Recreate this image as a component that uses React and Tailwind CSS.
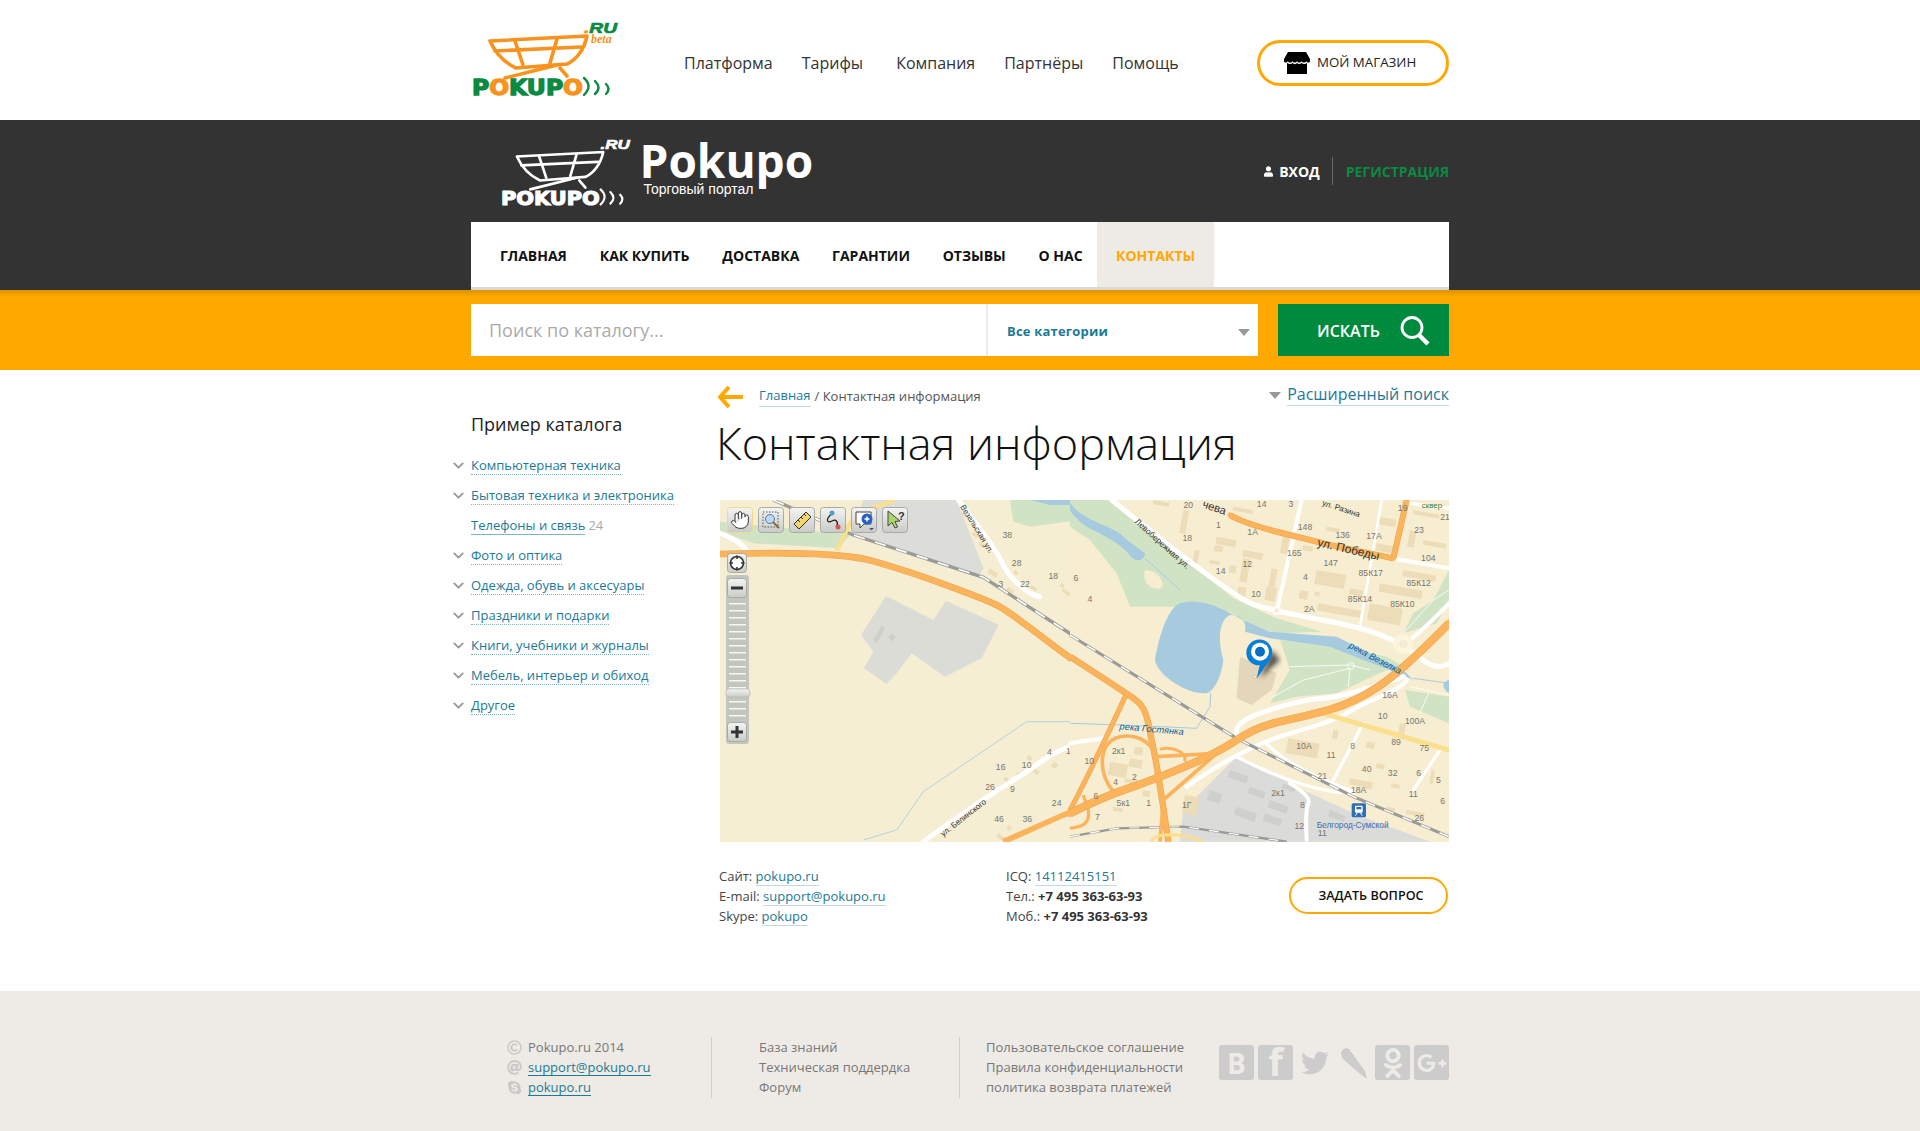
import React from 'react';
import { FaTwitter, FaOdnoklassniki, FaGooglePlusG, FaSkype, FaRegCopyright, FaAt, FaUser } from 'react-icons/fa';
import { ChevronDown, Hand } from 'lucide-react';

function Logo({ main, accent, green, beta, scale = 1 }) {
  return (
    <svg width={150 * scale} height={85 * scale} viewBox="0 0 150 85" className="block shrink-0 overflow-visible">
      <g fill="none" stroke={main} strokeWidth={beta ? 3.6 : 3} strokeLinejoin="round" strokeLinecap="round">
        <path d="M19,23 L116,18 C113,32 105,42 96,46 L45,50 C32,44 24,34 19,23Z" />
        <path d="M24,33 L110,29 M44,23 L52,47 M86,21 L79,45 M86,47 L34,60 M89,50 L96,58" />
      </g>
      <text x="1" y="77" textLength="111" lengthAdjust="spacingAndGlyphs" fontFamily="'DejaVu Sans',sans-serif" fontWeight="700" fontSize="21" fill={green} stroke={green} strokeWidth="1.3">
        P<tspan fill={main} stroke={main}>O</tspan>KUP<tspan fill={main} stroke={main}>O</tspan>
      </text>
      <g fill="none" stroke={green} strokeWidth="2.4" strokeLinecap="round">
        <path d="M113,60 Q122,68 113,77 M124,63 Q131,70 124,76 M135,66 Q140,71 135,76" />
      </g>
      <text x="113" y="15" textLength="33" lengthAdjust="spacingAndGlyphs" fontFamily="'Liberation Sans',sans-serif" fontWeight="700" fontStyle="italic" fontSize="15" fill={green} stroke={green} strokeWidth=".7">
        <tspan fill={accent} stroke={accent}>.</tspan>RU
      </text>
      {beta && <text x="120" y="25" fontFamily="'Liberation Serif',serif" fontWeight="700" fontStyle="italic" fontSize="12" fill={accent}>beta</text>}
    </svg>
  );
}

function smooth(str) {
  const p = str.trim().split(/\s+/).map((s) => s.split(',').map(Number));
  if (p.length < 3) return `M${p[0]} L${p[1]}`;
  let d = `M${p[0][0]},${p[0][1]}`;
  for (let i = 1; i < p.length - 1; i++) {
    const mx = (p[i][0] + p[i + 1][0]) / 2;
    const my = (p[i][1] + p[i + 1][1]) / 2;
    d += ` Q${p[i][0]},${p[i][1]} ${i === p.length - 2 ? p[i + 1][0] : mx},${i === p.length - 2 ? p[i + 1][1] : my}`;
  }
  return d;
}
const Road = ({ pts, w = 14, c = '#fff', edge }) => (
  <>
    {edge && <path d={smooth(pts)} fill="none" stroke={edge} strokeWidth={w + 3} strokeLinejoin="round" />}
    <path d={smooth(pts)} fill="none" stroke={c} strokeWidth={w} strokeLinejoin="round" strokeLinecap="round" />
  </>
);

const Z5Labels = [
  ['20',355,45],['1',445,105],['1А',548,127],['14',575,42],['3',663,42],['148',705,112],['136',818,135],['17А',912,137],['19',998,55],['23',1047,120],['21',1125,82],['165',673,190],['147',782,218],['104',1075,205],['18',352,145],['14',452,243],['12',532,222],['4',706,260],['85К17',902,250],['85К12',1046,280],['85К14',870,328],['85К10',997,343],['10',558,312],['2А',718,356],['6',18,265],['4',60,328],['16А',960,615],['10',938,677],['100А',1035,692],['89',978,755],['75',1063,775],['10А',702,767],['11',783,796],['8',848,768],['40',890,836],['32',968,850],['6',1046,850],['5',1105,870],['21',757,858],['18А',866,900],['11',1030,913],['6',1118,933],['26',1048,985],['2к1',146,782],['10',58,812],['4',137,877],['2',193,860],['5к1',160,940],['1',236,940],['6',78,918],['7',82,982],['1Г',350,945],['2к1',624,908],['8',697,945],['12',688,1008],['11',757,1030],
];
const Z4Labels = [['38',892,135],['28',920,218],['18',1030,258],['6',1100,265],['3',873,282],['22',945,282],['4',1018,785],['1',1075,782],['16',872,830],['10',950,825],['26',840,892],['9',907,898],['24',1040,940],['46',867,987],['36',952,987]];
const Buildings = [
  [340,60,18,70],[440,140,60,22],[435,165,25,18],[520,180,60,20],[520,205,22,70],[375,180,14,50],[420,210,30,10],[480,225,20,22],[505,290,25,30],[590,290,32,40],[605,235,18,55],[640,130,22,60],[690,300,25,25],[700,165,30,15],[740,240,90,42],[735,305,15,12],[745,340,130,22],[840,295,40,18],[930,280,130,25],[900,340,100,50],[920,160,60,22],[925,80,55,22],[1020,120,20,50],[1060,150,70,14],[1030,60,80,12],[1000,240,100,18],[770,110,40,12],[490,50,60,12],[250,30,50,12],
  [655,745,95,45],[790,720,16,25],[890,755,25,18],[920,820,25,14],[840,865,70,18],[880,880,25,14],[965,880,25,12],[1085,840,10,40],[1010,960,55,12],[950,950,25,10],[990,700,18,40],[120,815,55,40],[180,805,38,25],[195,770,25,22],[165,865,40,12],[130,950,30,12],[345,915,45,55],[220,900,22,18],
];

function Btn({ x, y, w = 26, h = 26, on, children }) {
  return (
    <g transform={`translate(${x},${y})`}>
      <rect x=".5" y=".5" width={w - 1} height={h - 1} rx="3" fill="url(#mbtn)" stroke={on ? '#f0d98a' : '#a9aca6'} />
      {children}
    </g>
  );
}

function MapDrawing() {
  const ticks = [];
  for (let i = 0; i < 17; i++) ticks.push(103 + i * 7);
  const O = '#fbb35c';
  const E = '#eda24c';
  return (
    <svg width="729" height="342" viewBox="0 0 729 342" className="block" fontFamily="'Liberation Sans',sans-serif">
      <defs>
        <linearGradient id="mbtn" x1="0" y1="0" x2="0" y2="1"><stop offset="0" stopColor="#f4f4f2" /><stop offset="1" stopColor="#c9cbc7" /></linearGradient>
        <filter id="pinb"><feGaussianBlur stdDeviation="8" /></filter>
      </defs>
      <rect width="729" height="342" fill="#f5eed2" />
      <g transform="translate(-10,-10) scale(.33333)">
        <polygon points="460,30 560,30 740,30 820,235 805,262 430,130" fill="#dcdcd8" />
        <polygon points="30,95 380,130 425,130 385,175 130,160 30,125" fill="#d0e3c4" />
        <polygon points="528,318 670,390 708,332 866,404 815,505 705,560 605,490 560,550 530,582 462,535 490,485 453,435" fill="#dcdcd6" />
        <polygon points="490,450 515,408 525,415 500,460" fill="#cfcfca" />
        <polygon points="535,440 548,430 558,440 545,455" fill="#cfcfca" />
        <polygon points="900,30 1110,30 1110,90 960,110 910,95" fill="#d0e3c4" />
        <polygon points="960,30 1110,30 1110,45 1020,45" fill="#a6cbde" />
        {[[840,235,30,14],[895,290,22,10],[965,285,20,10],[1060,295,28,10],[1055,278,12,12],[915,240,14,10],[955,795,16,12],[1032,815,16,16],[975,835,18,12],[885,860,18,10],[925,845,15,10],[790,125,18,10],[810,155,22,10],[760,65,14,10],[865,1030,22,12],[895,1005,14,12]].map((b, i) => (
          <rect key={i} x={b[0]} y={b[1]} width={b[2]} height={b[3]} fill="#ecdcb8" transform={`rotate(35 ${b[0]} ${b[1]})`} />
        ))}
        <polyline points="460,1050 560,1020 640,905 950,695 1110,695" fill="none" stroke="#b4d3dd" strokeWidth="3" />
        <Road pts="745,30 860,180 890,250 960,315 990,320" w={15} />
        <Road pts="640,1055 800,940 960,840 1040,780 1110,760" w={15} />
        <Road pts="30,130 90,150 112,185" w={15} />
        <polyline points="190,30 430,135 820,262 1110,450" fill="none" stroke="#9a9a98" strokeWidth="10" />
        <polyline points="190,30 430,135 820,262 1110,450" fill="none" stroke="#fff" strokeWidth="5" strokeDasharray="34 32" />
        <polyline points="380,182 420,100 445,68 555,30" fill="none" stroke="#fbdf8c" strokeWidth="13" />
        <Road pts="30,192 380,182 600,245 830,330 890,360 1060,490 1110,525" w={17} c={O} edge={E} />
        <polyline points="880,1055 1060,975 1110,955" fill="none" stroke={O} strokeWidth="17" />
        <Road pts="1110,895 1060,975 1110,1020" w={10} c={O} />
        {Z4Labels.map((l, i) => (
          <text key={i} x={l[1]} y={l[2] + 9} textAnchor="middle" fontSize="26" fill="#77766e">{l[0]}</text>
        ))}
        <text x="750" y="50" fontSize="24" fill="#333" transform="rotate(58 750 50)">Везельская ул.</text>
        <text x="700" y="1040" fontSize="24" fill="#333" transform="rotate(-38 700 1040)">ул. Белинского</text>
      </g>
      <rect x="350" width="379" height="342" fill="#f7edd0" />
      <g transform="translate(350,-10) scale(.33333)">
        <polygon points="0,30 125,30 490,325 620,385 755,425 620,430 530,400 480,365 330,350 180,350 140,250 60,150 0,110" fill="#d0e3c4" />
        <path d="M225,240 C270,240 290,290 270,295 C240,300 215,275 225,240Z" fill="#f7edd0" />
        <polygon points="630,450 800,470 950,500 1020,540 950,540 800,610 680,620 600,640 660,540" fill="#d0e3c4" />
        <polygon points="1005,600 1137,620 1137,700 1020,650" fill="#d0e3c4" />
        <polygon points="1000,430 1030,370 1090,330 1137,240 1137,330 1100,400" fill="#d0e3c4" />
        <path d="M0,40 C40,90 100,100 150,130 C180,160 200,170 225,190 C225,215 190,220 175,190 C150,160 90,130 50,110 C20,90 5,70 0,60Z" fill="#a6cbde" />
        <path d="M255,510 C270,420 300,350 330,340 C400,320 460,360 530,395 L600,425 L800,440 L900,490 L1000,540 L1030,570 L1000,555 L880,510 L780,470 L600,445 L525,425 C530,400 520,375 480,375 C450,390 440,440 460,510 C455,560 430,610 405,610 C340,610 260,550 255,510Z" fill="#a6cbde" />
        <path d="M1137,570 C1120,575 1110,590 1137,610Z" fill="#a6cbde" />
        <g fill="none" stroke="#a6cbde" strokeWidth="3">
          <polyline points="225,205 330,300" />
          <polyline points="0,700 160,705 380,715 420,650 422,610" />
          <polyline points="1030,565 1137,580" />
        </g>
        <path d="M510,500 L620,550 L605,600 L545,645 L500,625 Z" fill="#e4d6b8" />
        <g fill="none" stroke="#fff" strokeWidth="2.5">
          <polyline points="660,530 840,525 900,540" />
          <polyline points="610,620 700,570 840,535 835,590" />
          <circle cx="843" cy="528" r="10" />
          <polyline points="1000,430 1090,330 1137,300" />
          <polyline points="1075,610 1050,670" />
          <polyline points="1020,590 1137,615" />
        </g>
        <polygon points="340,960 500,800 700,900 850,970 1080,1055 330,1055" fill="#dbdbd9" />
        {[[480,840,60,22],[540,890,50,20],[600,930,60,22],[500,950,65,25],[585,970,55,22],[640,880,40,15],[780,960,50,20],[420,900,40,30]].map((b, i) => (
          <rect key={i} x={b[0]} y={b[1]} width={b[2]} height={b[3]} fill="#cfcfcd" transform={`rotate(20 ${b[0]} ${b[1]})`} />
        ))}
        {Buildings.map((b, i) => (
          <rect key={i} x={b[0]} y={b[1]} width={b[2]} height={b[3]} fill="#ecdcb8" transform={`rotate(10 ${b[0]} ${b[1]})`} />
        ))}
        <Road pts="125,30 490,325 620,365 870,410 1000,462 1100,545 1137,520" w={15} />
        <Road pts="695,30 620,365" w={12} />
        <Road pts="935,30 870,410" w={8} />
        <Road pts="965,205 1137,235" w={12} />
        <Road pts="1137,340 1040,440 1000,462" w={12} />
        <Road pts="1020,40 1137,55" w={10} />
        <Road pts="500,730 490,695 690,630 830,620 1000,560" w={15} />
        <Road pts="350,890 520,770 800,690 860,650 1000,590 1010,570" w={13} />
        <Road pts="500,800 700,905 850,910" w={10} />
        <Road pts="590,760 650,830 850,905" w={10} />
        <Road pts="710,1050 705,960 725,920 660,880" w={12} />
        <Road pts="785,880 880,700" w={10} />
        <Road pts="1030,900 1110,780" w={10} />
        <Road pts="0,760 100,745" w={12} />
        <circle cx="620" cy="362" r="14" fill="#fff" /><circle cx="620" cy="362" r="7" fill="#f7edd0" />
        <circle cx="1000" cy="462" r="30" fill="#fbf5dc" /><circle cx="1000" cy="462" r="11" fill="#f7edd0" stroke="#ddd" />
        <polyline points="0,435 500,745 850,920 1137,1040" fill="none" stroke="#9a9a98" strokeWidth="9" />
        <polyline points="0,435 500,745 850,920 1137,1040" fill="none" stroke="#fff" strokeWidth="4.5" strokeDasharray="30 30" />
        <polyline points="0,1040 140,1015 340,1010 650,1055" fill="none" stroke="#9a9a98" strokeWidth="7" />
        <polyline points="0,1040 140,1015 340,1010 650,1055" fill="none" stroke="#fff" strokeWidth="3.5" strokeDasharray="30 30" />
        <polyline points="760,670 1137,780" fill="none" stroke="#fbdf8c" strokeWidth="15" />
        <Road pts="480,75 520,100 740,155 800,170 970,205" w={15} c={O} edge={E} />
        <Road pts="970,205 1010,30" w={15} c={O} edge={E} />
        <Road pts="0,500 170,610 225,650 245,750 265,850 295,1055" w={16} c={O} edge={E} />
        <Road pts="170,610 50,870 0,960" w={12} c={O} edge={E} />
        <path d="M130,905 C85,850 85,770 135,745 C190,725 240,750 262,800 L440,790 L280,930 L270,1055" fill="none" stroke={O} strokeWidth="11" />
        <path d="M345,815 C350,780 300,770 270,778" fill="none" stroke={O} strokeWidth="9" />
        <path d="M0,1015 C40,1010 60,1000 55,960 L40,915" fill="none" stroke={O} strokeWidth="10" />
        <Road pts="1137,400 1000,540 850,640 700,680 560,710 440,790 250,870 100,920 0,970" w={21} c={O} edge={E} />
        <path d="M245,1055 C250,1030 330,1025 400,1055" fill="none" stroke="#fbdf8c" strokeWidth="9" />
        {Z5Labels.map((l, i) => (
          <text key={i} x={l[1]} y={l[2] + 9} textAnchor="middle" fontSize="26" fill="#77766e">{l[0]}</text>
        ))}
        <text x="740" y="168" fontSize="36" fill="#333" transform="rotate(13 740 168)">ул. Победы</text>
        <text x="193" y="97" fontSize="25" fill="#333" transform="rotate(42 193 97)">Левобережная ул.</text>
        <text x="755" y="45" fontSize="24" fill="#333" transform="rotate(18 755 45)">ул. Разина</text>
        <text x="395" y="52" fontSize="34" fill="#333" transform="rotate(18 395 52)">чева</text>
        <text x="835" y="472" fontSize="28" fontStyle="italic" fill="#0a5f9a" transform="rotate(28 835 472)">река Везелка</text>
        <text x="148" y="718" fontSize="28" fontStyle="italic" fill="#0a5f9a" transform="rotate(5 148 718)">река Гостянка</text>
        <text x="740" y="1013" fontSize="25" fill="#3e6ea8">Белгород-Сумской</text>
        <text x="1055" y="55" fontSize="24" fill="#2e7d32">сквер</text>
        <rect x="845" y="940" width="43" height="42" rx="5" fill="#2f6fb5" />
        <rect x="855" y="947" width="23" height="21" rx="3" fill="#fff" /><rect x="859" y="951" width="15" height="7" fill="#2f6fb5" />
        <path d="M856,977 L862,968 M877,977 L871,968" stroke="#fff" strokeWidth="3" />
        <polygon points="605,480 630,510 570,565" fill="#222" opacity=".75" filter="url(#pinb)" />
        <path d="M540,515 A39,39 0 1 1 595,516 L560,566 L569,526 A39,39 0 0 1 540,515Z" fill="#0a7fd6" />
        <circle cx="570" cy="485" r="27" fill="#fff" />
        <circle cx="570" cy="485" r="15" fill="#0a6fc4" />
        <circle cx="555" cy="560" r="4" fill="#fff" stroke="#888" strokeWidth="1" />
      </g>
      <Btn x={7} y={7} on><g transform="translate(3,3)"><Hand size={20} color="#333" strokeWidth={1.2} fill="#fff" /></g></Btn>
      <Btn x={38} y={7}>
        <rect x="5" y="5" width="15" height="15" fill="none" stroke="#555" strokeDasharray="1.5 1.5" />
        <circle cx="12" cy="12" r="4.5" fill="#bcd8f4" stroke="#5577aa" /><path d="M15,15 L21,21" stroke="#8a6d3b" strokeWidth="2" />
      </Btn>
      <Btn x={69} y={7}>
        <path d="M5,17 L17,5 L22,10 L10,22Z" fill="#f2d66a" stroke="#333" />
        <path d="M9,13 L11,15 M12,10 L14,12 M15,7 L17,9" stroke="#333" />
      </Btn>
      <Btn x={100} y={7}>
        <path d="M12,7 C5,12 7,17 12,14 C17,11 19,17 16,20" fill="none" stroke="#222" strokeWidth="1.3" />
        <circle cx="12" cy="6" r="2.5" fill="#4aa3c8" /><circle cx="18" cy="20" r="2.5" fill="#d9534f" />
      </Btn>
      <Btn x={131} y={7}>
        <path d="M5,5 H20 V17 H13 L9,21 V17 H5Z" fill="#fff" stroke="#444" />
        <circle cx="16" cy="12" r="5.5" fill="#2a5fc4" /><path d="M13.5,12 H18.5 M16,9.5 V14.5" stroke="#fff" strokeWidth="1.5" />
        <path d="M18,21 H23 L20.5,23.5Z" fill="#557" />
      </Btn>
      <Btn x={162} y={7}>
        <path d="M6,4 L6,19 L10,15.5 L13,21 L15.5,20 L13,14.5 L18,14Z" fill="#a8d66a" stroke="#444" />
        <text x="16" y="13" fontSize="11" fontWeight="700" fill="#333">?</text>
      </Btn>
      <Btn x={7} y={53} w={20} h={20}>
        <circle cx="10" cy="10" r="6.5" fill="#fff" stroke="#333" strokeWidth="1.6" />
        <path d="M10,2.5 V6 M10,14 V17.5 M2.5,10 H6 M14,10 H17.5" stroke="#333" strokeWidth="1.6" />
      </Btn>
      <rect x="6" y="75" width="23" height="169" rx="3" fill="#c3c6be" />
      {ticks.map((y) => <rect key={y} x="9" y={y} width="17" height="1.5" fill="#f6f6f2" />)}
      <Btn x={7} y={78} w={20} h={20}><rect x="4" y="8.5" width="12" height="3" fill="#333" /></Btn>
      <rect x="6" y="189" width="24" height="8" rx="3" fill="url(#mbtn)" stroke="#b0b2ad" strokeWidth=".6" />
      <Btn x={7} y={222} w={20} h={20}><path d="M4,10 H16 M10,4 V16" stroke="#333" strokeWidth="3" /></Btn>
    </svg>
  );
}

const catalog = [
  ['Компьютерная техника', true], ['Бытовая техника и электроника', true], ['Телефоны и связь', false], ['Фото и оптика', true],
  ['Одежда, обувь и аксесуары', true], ['Праздники и подарки', true], ['Книги, учебники и журналы', true], ['Мебель, интерьер и обиход', true], ['Другое', true],
];

const A = ({ children, className = '' }) => (
  <a className={`text-[#1c7a96] border-b border-[#bcdbe4] ${className}`}>{children}</a>
);

export default function App() {
  return (
    <div className="w-full h-[1131px] overflow-hidden bg-white font-['Open_Sans',sans-serif] text-[#333]">
      <div className="w-[978px] mx-auto h-[120px] flex items-center">
        <Logo main="#f7931e" accent="#f7931e" green="#0b8a43" beta />
        <nav className="ml-[63px] flex items-center text-[16px] text-[#333] mt-[6px]">
          <a>Платформа</a>
          <a className="ml-[29px]">Тарифы</a>
          <a className="ml-[33px]">Компания</a>
          <a className="ml-[29px]">Партнёры</a>
          <a className="ml-[29px]">Помощь</a>
        </nav>
        <a className="ml-auto mt-[6px] w-[192px] h-[46px] rounded-full border-[3px] border-[#ffa800] flex items-center pl-[24px] text-[13.3px] text-[#222]">
          <svg width="26" height="22" viewBox="0 0 26 22" className="shrink-0">
            <path d="M4,0 H22 L26,7 V9 C26,11 23,11 22,9 C22,11 18,11 17.5,9 C17,11 13.5,11 13,9 C12.5,11 9,11 8.5,9 C8,11 4,11 4,9 C3,11 0,11 0,9 V7Z" fill="#000" />
            <path d="M3,11 V22 H23 V11 C21,12.5 19,12 17.5,11 C16,12.5 14,12 13,11 C12,12.5 10,12.5 8.5,11 C7,12.5 5,12 3,11Z" fill="#000" />
          </svg>
          <span className="ml-[7px]">МОЙ МАГАЗИН</span>
        </a>
      </div>

      <div className="h-[170px] bg-[#333]">
        <div className="w-[978px] mx-auto h-full flex flex-col">
          <div className="h-[102px] flex items-start relative">
            <div className="ml-[29px] mt-[16px]">
              <Logo main="#fff" accent="#fff" green="#fff" scale={0.89} />
            </div>
            <div className="ml-[6px] flex flex-col">
              <span className="text-[46px] font-bold text-white leading-[44px] mt-[18px]">Pokupo</span>
              <span className="text-[14px] text-white leading-[14px] font-['Liberation_Sans',sans-serif] ml-[4px]">Торговый портал</span>
            </div>
            <div className="ml-auto mt-[37px] flex items-center h-[28px] text-[14px] font-bold">
              <FaUser className="text-white w-[9px] h-[11px]" />
              <span className="text-white ml-[6px]">ВХОД</span>
              <span className="w-px h-[28px] bg-[#666] ml-[12px] mr-[13px]" />
              <span className="text-[#0b8a43]">РЕГИСТРАЦИЯ</span>
            </div>
          </div>
          <div className="h-[68px] bg-white border-b-[3px] border-[#d9d9d9] flex text-[14px] font-bold text-[#111] pl-[12.5px]">
            {['ГЛАВНАЯ', 'КАК КУПИТЬ', 'ДОСТАВКА', 'ГАРАНТИИ', 'ОТЗЫВЫ', 'О НАС'].map((t) => (
              <a key={t} className="px-[16.4px] pt-[2px] flex items-center">{t}</a>
            ))}
            <a className="px-[19px] pt-[2px] -ml-[2px] flex items-center bg-[#eeebe6] text-[#ffa800]">КОНТАКТЫ</a>
          </div>
        </div>
      </div>

      <div className="h-[80px] bg-[linear-gradient(#dd9300,#ffa800_7px)] pt-[14px]">
        <div className="w-[978px] mx-auto h-[52px] flex">
          <div className="w-[515px] bg-white flex items-center pl-[18px] text-[18px] text-[#aaa]">Поиск по каталогу...</div>
          <div className="w-[272px] bg-white border-l-2 border-[#eeebe6] flex items-center pl-[19px] pr-[8px] text-[13px] font-bold text-[#1c7a96] justify-between tracking-[0.2px]">
            <span className="mt-[3px]">Все категории</span>
            <span className="w-0 h-0 border-x-[6px] border-x-transparent border-t-[7px] border-t-[#999] mt-[5px]" />
          </div>
          <div className="ml-[20px] w-[171px] bg-[#008a3e] flex items-center pl-[39px] text-white text-[16px] font-semibold">
            <span className="mt-[2px]">ИСКАТЬ</span>
            <svg width="32" height="32" viewBox="0 0 32 32" className="ml-[19px] mt-[1px]">
              <circle cx="13" cy="12.5" r="10" fill="none" stroke="#fff" strokeWidth="2.8" />
              <path d="M20,20 L29,29" stroke="#fff" strokeWidth="4.5" />
            </svg>
          </div>
        </div>
      </div>

      <div className="w-[978px] mx-auto h-[621px] flex">
        <aside className="w-[248px] shrink-0 pt-[41px]">
          <h3 className="text-[18px] leading-[26px] text-[#222]">Пример каталога</h3>
          <ul className="mt-[19px] text-[13px]">
            {catalog.map(([t, ch]) => (
              <li key={t} className="relative h-[30px] leading-[18px]">
                {ch && <ChevronDown className="absolute -left-[21px] top-[1px] w-[17px] h-[17px] text-[#999]" strokeWidth={2.6} />}
                <a className={`text-[#1c7a96] border-b ${ch ? 'border-dotted border-[#7fb4c4]' : 'border-[#7fb4c4]'}`}>{t}</a>
                {!ch && <span className="text-[#aaa] ml-[3px]">24</span>}
              </li>
            ))}
          </ul>
        </aside>

        <main className="flex-1 min-w-0">
          <div className="h-[52px] flex items-center text-[13px] pt-[1px]">
            <div className="flex items-center flex-1">
              <svg width="25" height="24" viewBox="0 0 25 24" className="ml-[-1px] shrink-0">
                <path d="M11,2 L2,12 L11,22 M3,12 H25" fill="none" stroke="#ffa800" strokeWidth="4" />
              </svg>
              <A className="ml-[16px]">Главная</A>
              <span className="text-[#555] ml-[4px]">/ Контактная информация</span>
            </div>
            <span className="w-0 h-0 border-x-[6px] border-x-transparent border-t-[7px] border-t-[#999] mr-[6px] -mt-[3px]" />
            <A className="text-[16px] leading-[22px] -mt-[4px]">Расширенный поиск</A>
          </div>
          <h1 className="text-[45px] font-light text-[#111] leading-[56px] -ml-[3px] -mt-[7px]">Контактная информация</h1>
          <div className="mt-[29px] ml-[1px] h-[342px]"><MapDrawing /></div>

          <div className="mt-[24px] flex text-[13px] leading-[20px] text-[#444] relative">
            <div className="w-[287px]">
              <div>Сайт: <A>pokupo.ru</A></div>
              <div>E-mail: <A>support@pokupo.ru</A></div>
              <div>Skype: <A>pokupo</A></div>
            </div>
            <div className="flex-1">
              <div>ICQ: <A>14112415151</A></div>
              <div>Тел.: <b className="text-[#333]">+7 495 363-63-93</b></div>
              <div>Моб.: <b className="text-[#333]">+7 495 363-63-93</b></div>
            </div>
            <a className="mt-[11px] w-[159px] h-[37px] mr-[1px] rounded-full border-2 border-[#ffa800] flex items-center justify-center pl-[5px] text-[12.6px] font-semibold text-[#111]">ЗАДАТЬ ВОПРОС</a>
          </div>
        </main>
      </div>

      <footer className="h-[140px] bg-[#eeebe6]">
        <div className="w-[978px] mx-auto flex pt-[46px] text-[13px] leading-[20px] text-[#777]">
          <div className="w-[241px] pl-[36px] border-r border-[#d0cec8] h-[61px]">
            <div className="flex items-center h-[20px]"><FaRegCopyright className="w-[15px] h-[15px] text-[#c8c8c8] mr-[6px]" />Pokupo.ru 2014</div>
            <div className="flex items-center h-[20px]"><FaAt className="w-[15px] h-[15px] text-[#c8c8c8] mr-[6px]" /><A className="leading-[16px] !border-[#1c7a96]">support@pokupo.ru</A></div>
            <div className="flex items-center h-[20px]"><FaSkype className="w-[15px] h-[15px] text-[#c8c8c8] mr-[6px]" /><A className="leading-[16px] !border-[#1c7a96]">pokupo.ru</A></div>
          </div>
          <div className="w-[248px] pl-[47px] border-r border-[#d0cec8] h-[61px]">
            <div>База знаний</div><div>Техническая поддердка</div><div>Форум</div>
          </div>
          <div className="w-[232px] pl-[26px] h-[61px]">
            <div>Пользовательское соглашение</div><div>Правила конфиденциальности</div><div className="whitespace-nowrap">политика возврата платежей</div>
          </div>
          <div className="flex-1 flex justify-end gap-[4px] mt-[8px] h-[35px] text-[#eeebe6]">
            <span className="w-[35px] h-[35px] rounded-[3px] bg-[#ccc] flex items-center justify-center text-[28px] font-bold">B</span>
            <span className="w-[35px] h-[35px] rounded-[3px] bg-[#ccc] flex items-end justify-center text-[38px] font-bold leading-[38px] overflow-hidden">f</span>
            <span className="w-[35px] h-[35px] flex items-center justify-center"><FaTwitter className="w-[34px] h-[28px] text-[#ccc]" /></span>
            <span className="w-[35px] h-[35px] flex items-center justify-center">
              <svg width="28" height="32" viewBox="0 0 28 32"><path d="M1,6 C2,2 6,0 9,2 L25,24 L27,32 L19,26 L2,11 Z" fill="#ccc" /></svg>
            </span>
            <span className="w-[35px] h-[35px] rounded-[3px] bg-[#ccc] flex items-center justify-center"><FaOdnoklassniki className="w-[24px] h-[30px]" /></span>
            <span className="w-[35px] h-[35px] rounded-[3px] bg-[#ccc] flex items-center justify-center"><FaGooglePlusG className="w-[30px] h-[28px]" /></span>
          </div>
        </div>
      </footer>
    </div>
  );
}
